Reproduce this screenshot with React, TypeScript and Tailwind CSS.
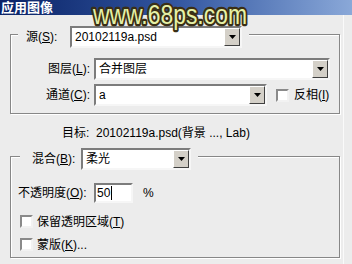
import React from "react";

function Arrow() {
  return (
    <div className="w-[16px] self-stretch bg-[#d4d0c8] border border-t-[#ffffff] border-l-[#ffffff] border-b-[#404040] border-r-[#404040] flex items-center justify-center">
      <svg width="7" height="4" viewBox="0 0 7 4">
        <path d="M0 0H7L3.5 4Z" fill="#000" />
      </svg>
    </div>
  );
}

function Select({ className, text }: { className: string; text: string }) {
  return (
    <div
      className={
        "flex h-[22px] bg-white border-2 border-t-[#7c7c7c] border-l-[#7c7c7c] border-b-[#f6f6f6] border-r-[#f6f6f6] " +
        className
      }
    >
      <div className="flex-1 flex items-center pl-[3px] text-[12px] leading-none whitespace-nowrap overflow-hidden">
        {text}
      </div>
      <Arrow />
    </div>
  );
}

function Check() {
  return (
    <div className="w-[13px] h-[13px] bg-white border-2 border-t-[#8a8a8a] border-l-[#8a8a8a] border-b-[#f2f2f2] border-r-[#f2f2f2] shrink-0" />
  );
}

const groupCls =
  "ml-[10px] w-[330px] border border-[#878787] shadow-[inset_1px_1px_0_#ffffff,1px_1px_0_#ffffff] flex flex-col";

export default function App() {
  return (
    <div className="relative w-[352px] h-[264px] overflow-hidden bg-[#ececec] text-black font-['Liberation_Sans','Noto_Sans_CJK_SC',sans-serif] text-[12px]">
      <div className="w-[344px] h-[264px] border-r border-[#fafafa] flex flex-col">
        {/* title bar */}
        <div className="w-[352px] h-[15px] bg-gradient-to-r from-[#0a2266] via-[#3356a0] to-[#8aa8d8] flex items-center">
          <span className="text-white font-bold text-[13px] leading-none pl-[1px]">应用图像</span>
        </div>

        {/* group 1 */}
        <div className={groupCls + " mt-[19px] pb-[7px]"}>
          <div className="-mt-[9px] ml-[7px] w-fit h-[22px] bg-[#ececec] pl-[8px] pr-[7px] flex items-center">
            <span className="w-[39px] whitespace-nowrap">
              源(<u>S</u>):
            </span>
            <Select className="ml-[5px] w-[172px]" text="20102119a.psd" />
          </div>
          <div className="mt-[10px] flex items-center">
            <span className="w-[79px] text-right whitespace-nowrap">
              图层(<u>L</u>):
            </span>
            <Select className="ml-[4px] w-[236px]" text="合并图层" />
          </div>
          <div className="mt-[4px] flex items-center">
            <span className="w-[79px] text-right whitespace-nowrap">
              通道(<u>C</u>):
            </span>
            <Select className="ml-[4px] w-[173px]" text="a" />
            <div className="ml-[9px]">
              <Check />
            </div>
            <span className="ml-[5px] whitespace-nowrap">
              反相(<u>I</u>)
            </span>
          </div>
        </div>

        {/* target */}
        <div className="mt-[11px] pl-[62px] h-[16px] leading-[16px] whitespace-pre">
          目标:  20102119a.psd(背景 ..., Lab)
        </div>

        {/* group 2 */}
        <div className={groupCls + " mt-[15px] pb-[6px]"}>
          <div className="-mt-[9px] ml-[9px] w-fit h-[22px] bg-[#ececec] pl-[12px] pr-[7px] flex items-center">
            <span className="w-[46px] whitespace-nowrap">
              混合(<u>B</u>):
            </span>
            <Select className="ml-[3px] w-[110px]" text="柔光" />
          </div>
          <div className="mt-[13px] pl-[7px] flex items-center">
            <span className="w-[76px] whitespace-nowrap">
              不透明度(<u>O</u>):
            </span>
            <div className="w-[39px] h-[20px] bg-white border-2 border-t-[#7c7c7c] border-l-[#7c7c7c] border-b-[#f6f6f6] border-r-[#f6f6f6] flex items-center pl-[1px]">
              <span className="leading-none">50</span>
              <span className="w-[1px] h-[14px] bg-black ml-[1px]" />
            </div>
            <span className="ml-[10px]">%</span>
          </div>
          <div className="mt-[12px] pl-[9px] flex items-center h-[13px]">
            <Check />
            <span className="ml-[4px] whitespace-nowrap">
              保留透明区域(<u>T</u>)
            </span>
          </div>
          <div className="mt-[10px] pl-[9px] flex items-center h-[13px]">
            <Check />
            <span className="ml-[4px] whitespace-nowrap">
              蒙版(<u>K</u>)...
            </span>
          </div>
        </div>
      </div>

      {/* watermark */}
      <svg className="absolute top-0 left-[90px]" width="166" height="34" viewBox="0 0 166 34">
        <text
          x="3"
          y="24"
          fontSize="28"
          fontFamily="Liberation Sans, Arial, sans-serif"
          textLength="154"
          lengthAdjust="spacingAndGlyphs"
          fill="#e6f1a6"
          stroke="#3a2f16"
          strokeWidth="4.5"
          strokeLinejoin="round"
          paintOrder="stroke"
        >
          www.68ps.com
        </text>
      </svg>
    </div>
  );
}
